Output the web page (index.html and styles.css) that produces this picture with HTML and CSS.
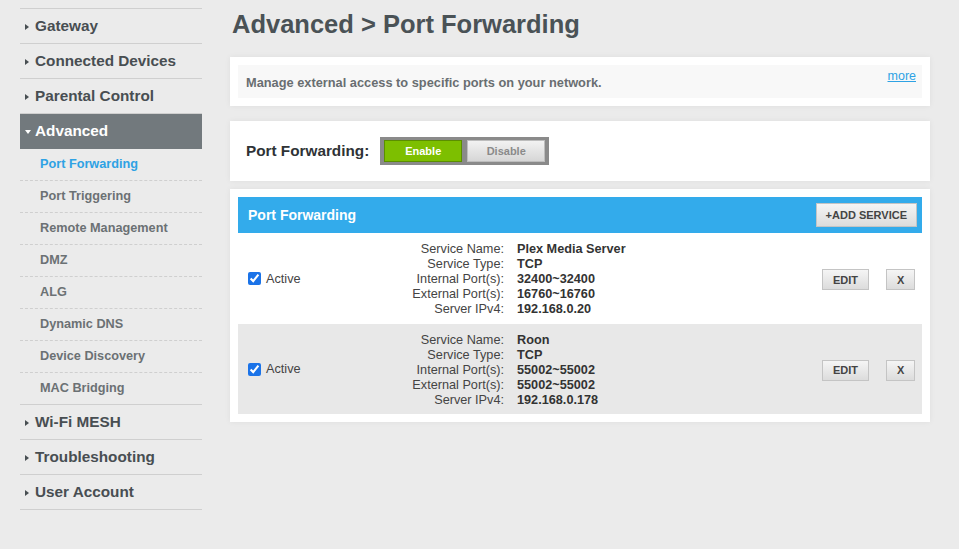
FILE: index.html
```html
<!DOCTYPE html>
<html lang="en">
<head>
    <meta charset="UTF-8">
    <meta name="viewport" content="width=device-width, initial-scale=1.0">
    <title>Advanced &gt; Port Forwarding</title>
    <link rel="stylesheet" href="styles.css">
</head>
<body>
    <div class="page">
        <ul class="nav">
            <li class="nav-item"><span class="arrow"></span>Gateway</li>
            <li class="nav-item"><span class="arrow"></span>Connected Devices</li>
            <li class="nav-item"><span class="arrow"></span>Parental Control</li>
            <li class="nav-item open"><span class="arrow"></span>Advanced</li>
            <li class="sub-item current">Port Forwarding</li>
            <li class="sub-item">Port Triggering</li>
            <li class="sub-item">Remote Management</li>
            <li class="sub-item">DMZ</li>
            <li class="sub-item">ALG</li>
            <li class="sub-item">Dynamic DNS</li>
            <li class="sub-item">Device Discovery</li>
            <li class="sub-item last">MAC Bridging</li>
            <li class="nav-item"><span class="arrow"></span>Wi-Fi MESH</li>
            <li class="nav-item"><span class="arrow"></span>Troubleshooting</li>
            <li class="nav-item"><span class="arrow"></span>User Account</li>
        </ul>

        <div class="main">
            <h1>Advanced &gt; Port Forwarding</h1>

            <div class="panel">
                <div class="intro">
                    <p>Manage external access to specific ports on your network.</p>
                    <a href="#" class="more">more</a>
                </div>
            </div>

            <div class="panel switch-panel">
                <span class="switch-label">Port Forwarding:</span>
                <div class="toggle">
                    <button class="on">Enable</button>
                    <button class="off">Disable</button>
                </div>
            </div>

            <div class="panel table-panel">
                <div class="table-head">
                    <span>Port Forwarding</span>
                    <button class="btn">+ADD SERVICE</button>
                </div>

                <div class="service">
                    <label class="active"><input type="checkbox" checked> Active</label>
                    <dl class="details">
                        <dt>Service Name:</dt><dd>Plex Media Server</dd>
                        <dt>Service Type:</dt><dd>TCP</dd>
                        <dt>Internal Port(s):</dt><dd>32400~32400</dd>
                        <dt>External Port(s):</dt><dd>16760~16760</dd>
                        <dt>Server IPv4:</dt><dd>192.168.0.20</dd>
                    </dl>
                    <div class="actions">
                        <button class="btn edit">EDIT</button>
                        <button class="btn del">X</button>
                    </div>
                </div>

                <div class="service alt">
                    <label class="active"><input type="checkbox" checked> Active</label>
                    <dl class="details">
                        <dt>Service Name:</dt><dd>Roon</dd>
                        <dt>Service Type:</dt><dd>TCP</dd>
                        <dt>Internal Port(s):</dt><dd>55002~55002</dd>
                        <dt>External Port(s):</dt><dd>55002~55002</dd>
                        <dt>Server IPv4:</dt><dd>192.168.0.178</dd>
                    </dl>
                    <div class="actions">
                        <button class="btn edit">EDIT</button>
                        <button class="btn del">X</button>
                    </div>
                </div>
            </div>
        </div>
    </div>
</body>
</html>
```

FILE: styles.css
```css
body {
    margin: 0;
    background-color: #ebebeb;
    font-family: "Liberation Sans", Arial, sans-serif;
    color: #4a5054;
}
.page {
    display: flex;
    align-items: flex-start;
    padding: 8px 0 0 20px;
}
.nav {
    list-style: none;
    margin: 0;
    padding: 0;
    width: 182px;
    border-top: 1px solid #cfcfcf;
}
.nav-item {
    height: 34px;
    line-height: 34px;
    border-bottom: 1px solid #cfcfcf;
    font-size: 15.3px;
    font-weight: bold;
    color: #484e52;
    padding-left: 5px;
    display: flex;
    align-items: center;
}
.nav-item .arrow {
    width: 0;
    height: 0;
    border-top: 3px solid transparent;
    border-bottom: 3px solid transparent;
    border-left: 4px solid #484e52;
    margin: 2px 6px 0 0;
}
.nav-item.open {
    background-color: #72797d;
    color: #ffffff;
    border-bottom-color: #72797d;
}
.nav-item.open .arrow {
    border-left: 3px solid transparent;
    border-right: 3px solid transparent;
    border-top: 4px solid #ffffff;
    border-bottom: 0;
    margin: 1px 4px 0 0;
}
.sub-item {
    height: 31px;
    line-height: 31px;
    border-bottom: 1px dashed #cfcfcf;
    padding-left: 20px;
    font-size: 12.7px;
    font-weight: bold;
    color: #6b7174;
}
.sub-item.current {
    color: #2ea2e4;
}
.sub-item.last {
    border-bottom: 1px solid #cfcfcf;
}
.main {
    margin-left: 28px;
    width: 700px;
}
.main h1 {
    margin: 0;
    padding: 1px 0 0 2px;
    font-size: 25.5px;
    line-height: 30px;
    color: #4a5256;
    height: 48px;
}
.panel {
    background-color: #ffffff;
    padding: 8px;
    margin-bottom: 15px;
    box-shadow: 0 0 6px rgba(0, 0, 0, 0.06);
}
.intro {
    background-color: #f8f8f8;
    height: 33px;
    display: flex;
    justify-content: space-between;
    padding: 0 6px 0 8px;
}
.intro p {
    margin: 0;
    font-size: 12.8px;
    font-weight: bold;
    color: #696e71;
    line-height: 33px;
    padding-top: 1px;
}
.intro .more {
    font-size: 12.5px;
    color: #2ea2e4;
    margin-top: 4px;
}
.switch-panel {
    display: flex;
    align-items: center;
    height: 44px;
    padding-left: 16px;
    margin-bottom: 8px;
}
.switch-label {
    font-size: 15.3px;
    font-weight: bold;
    color: #2f3336;
    margin-right: 11px;
}
.toggle {
    display: flex;
    gap: 5px;
    background-color: #8a8a8a;
    padding: 3px 4px;
}
.toggle button {
    width: 78px;
    height: 22px;
    font-family: inherit;
    font-size: 11px;
    font-weight: bold;
    cursor: pointer;
}
.toggle .on {
    background-color: #7dbf00;
    border: 1px solid #5b8f00;
    color: #ffffff;
}
.toggle .off {
    background: linear-gradient(#f2f2f2, #d6d6d6);
    border: 1px solid #bdbdbd;
    color: #8a8a8a;
}
.table-head {
    background-color: #33abeb;
    height: 36px;
    display: flex;
    align-items: center;
    justify-content: space-between;
    padding: 0 5px 0 10px;
    color: #ffffff;
    font-size: 14px;
    font-weight: bold;
}
.btn {
    background: linear-gradient(#f5f5f5, #dcdcdc);
    border: 1px solid #c4c4c4;
    font-family: inherit;
    font-size: 11px;
    font-weight: bold;
    color: #444444;
    height: 24px;
    padding: 0 9px;
    cursor: pointer;
}
.service {
    display: flex;
    align-items: center;
    height: 91px;
    padding-left: 10px;
}
.service.alt {
    background-color: #e8e8e8;
    height: 90px;
}
.active {
    width: 155px;
    font-size: 12.7px;
    color: #444444;
    display: flex;
    align-items: center;
}
.active input {
    width: 13px;
    height: 13px;
    margin: 0 5px 0 0;
    accent-color: #1b73e8;
}
.details {
    display: grid;
    grid-template-columns: 101px auto;
    column-gap: 13px;
    margin: 0;
    width: 419px;
    font-size: 12.7px;
    line-height: 15px;
    padding-top: 2px;
}
.details dt {
    text-align: right;
    color: #444444;
}
.details dd {
    margin: 0;
    font-weight: bold;
    color: #333333;
}
.actions {
    display: flex;
    gap: 17px;
    padding-top: 2px;
}
.actions .btn {
    height: 21px;
    padding: 0 10px;
}
.actions .del {
    width: 29px;
    padding: 0;
}
```
